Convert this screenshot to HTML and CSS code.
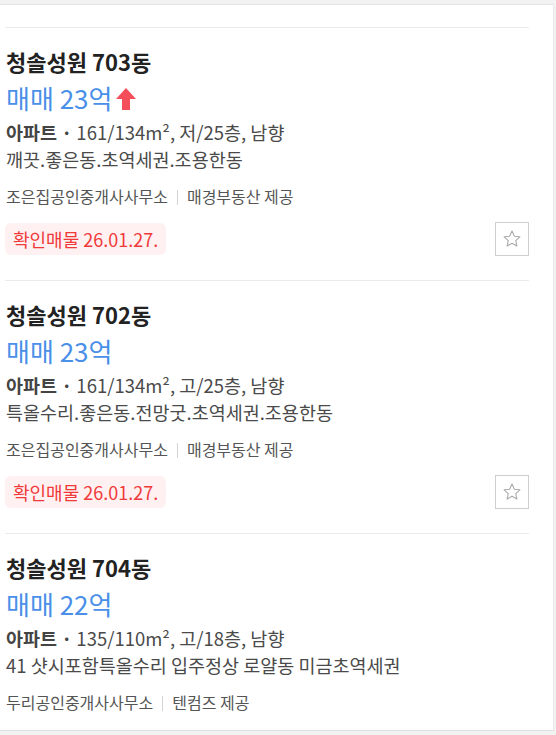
FILE: index.html
```html
<!DOCTYPE html>
<html>
<head>
  <title>매물 목록</title>
  <link rel="stylesheet" href="styles.css">
</head>
<body>

<div class="panel">
  <ul class="list">

    <!-- 703동 -->
    <li class="item">
      <div class="title">청솔성원 703동</div>
      <div class="price">매매 23억
        <svg class="up" width="20" height="22" viewBox="0 0 20 22"><path d="M10 0 L20 11 L14 11 L14 22 L6 22 L6 11 L0 11 Z" fill="#f44e5a"/></svg>
      </div>
      <div class="spec"><b>아파트 ·</b> 161/134m², 저/25층, 남향</div>
      <div class="desc">깨끗.좋은동.초역세권.조용한동</div>
      <div class="agent">조은집공인중개사사무소<span class="bar"></span>매경부동산 제공</div>
      <div class="bottom">
        <span class="badge">확인매물 26.01.27.</span>
        <button class="star"><svg width="20" height="20" viewBox="0 0 24 24"><path d="M12 2.5l2.9 6.2 6.6.7-5 4.5 1.4 6.6L12 17.2l-5.9 3.3 1.4-6.6-5-4.5 6.6-.7z" fill="none" stroke="#aaa" stroke-width="1.3" stroke-linejoin="round"/></svg></button>
      </div>
    </li>

    <!-- 702동 -->
    <li class="item">
      <div class="title">청솔성원 702동</div>
      <div class="price">매매 23억</div>
      <div class="spec"><b>아파트 ·</b> 161/134m², 고/25층, 남향</div>
      <div class="desc">특올수리.좋은동.전망굿.초역세권.조용한동</div>
      <div class="agent">조은집공인중개사사무소<span class="bar"></span>매경부동산 제공</div>
      <div class="bottom">
        <span class="badge">확인매물 26.01.27.</span>
        <button class="star"><svg width="20" height="20" viewBox="0 0 24 24"><path d="M12 2.5l2.9 6.2 6.6.7-5 4.5 1.4 6.6L12 17.2l-5.9 3.3 1.4-6.6-5-4.5 6.6-.7z" fill="none" stroke="#aaa" stroke-width="1.3" stroke-linejoin="round"/></svg></button>
      </div>
    </li>

    <!-- 704동 -->
    <li class="item last">
      <div class="title">청솔성원 704동</div>
      <div class="price">매매 22억</div>
      <div class="spec"><b>아파트 ·</b> 135/110m², 고/18층, 남향</div>
      <div class="desc">41 샷시포함특올수리 입주정상 로얄동 미금초역세권</div>
      <div class="agent">두리공인중개사사무소<span class="bar"></span>텐컴즈 제공</div>
    </li>

  </ul>
</div>

</body>
</html>
```

FILE: styles.css
```css
body {
  margin: 0;
  padding: 0;
  background: #f2f2f2;
  font-family: "Noto Sans CJK KR", "Noto Sans", sans-serif;
}

.panel {
  margin-top: 4px;
  width: 554px;
  background: #fff;
  border-top: 1px solid #e4e4e4;
  border-right: 1px solid #e8e8e8;
  border-bottom: 1px solid #e0e0e0;
  padding-top: 22px;
  box-sizing: border-box;
}

.list {
  list-style: none;
  margin: 0 24px 0 5px;
  padding: 0;
}

.item {
  border-top: 1px solid #ebebeb;
  padding: 19px 0 24px 1px;
}

.item.last {
  padding-bottom: 17px;
}

.title {
  font-size: 22px;
  font-weight: 700;
  color: #222;
  line-height: 28px;
}

.price {
  display: flex;
  align-items: center;
  gap: 4px;
  font-size: 26px;
  color: #4a90e8;
  line-height: 34px;
  margin-top: 6px;
}

.up {
  margin-top: 1px;
}

.spec,
.desc {
  font-size: 18.5px;
  color: #4a4a4a;
}

.spec {
  line-height: 28px;
  margin-top: 3px;
}

.desc {
  line-height: 26px;
}

.spec b {
  color: #444;
}

.agent {
  margin-top: 13px;
  font-size: 16px;
  color: #555;
  line-height: 22px;
  display: flex;
  align-items: center;
}

.bar {
  width: 1px;
  height: 15px;
  background: #d4d4d4;
  margin: 2px 9px 0;
}

.bottom {
  display: flex;
  justify-content: space-between;
  align-items: center;
  margin-top: 15px;
}

.badge {
  background: #fff1f1;
  color: #f03a3a;
  font-size: 18px;
  padding: 0 8px;
  line-height: 32px;
  border-radius: 6px;
  margin-left: -1px;
}

.star {
  width: 34px;
  height: 34px;
  border: 1px solid #cfcfcf;
  background: #fff;
  padding: 0;
  display: flex;
  align-items: center;
  justify-content: center;
  cursor: pointer;
}
```
